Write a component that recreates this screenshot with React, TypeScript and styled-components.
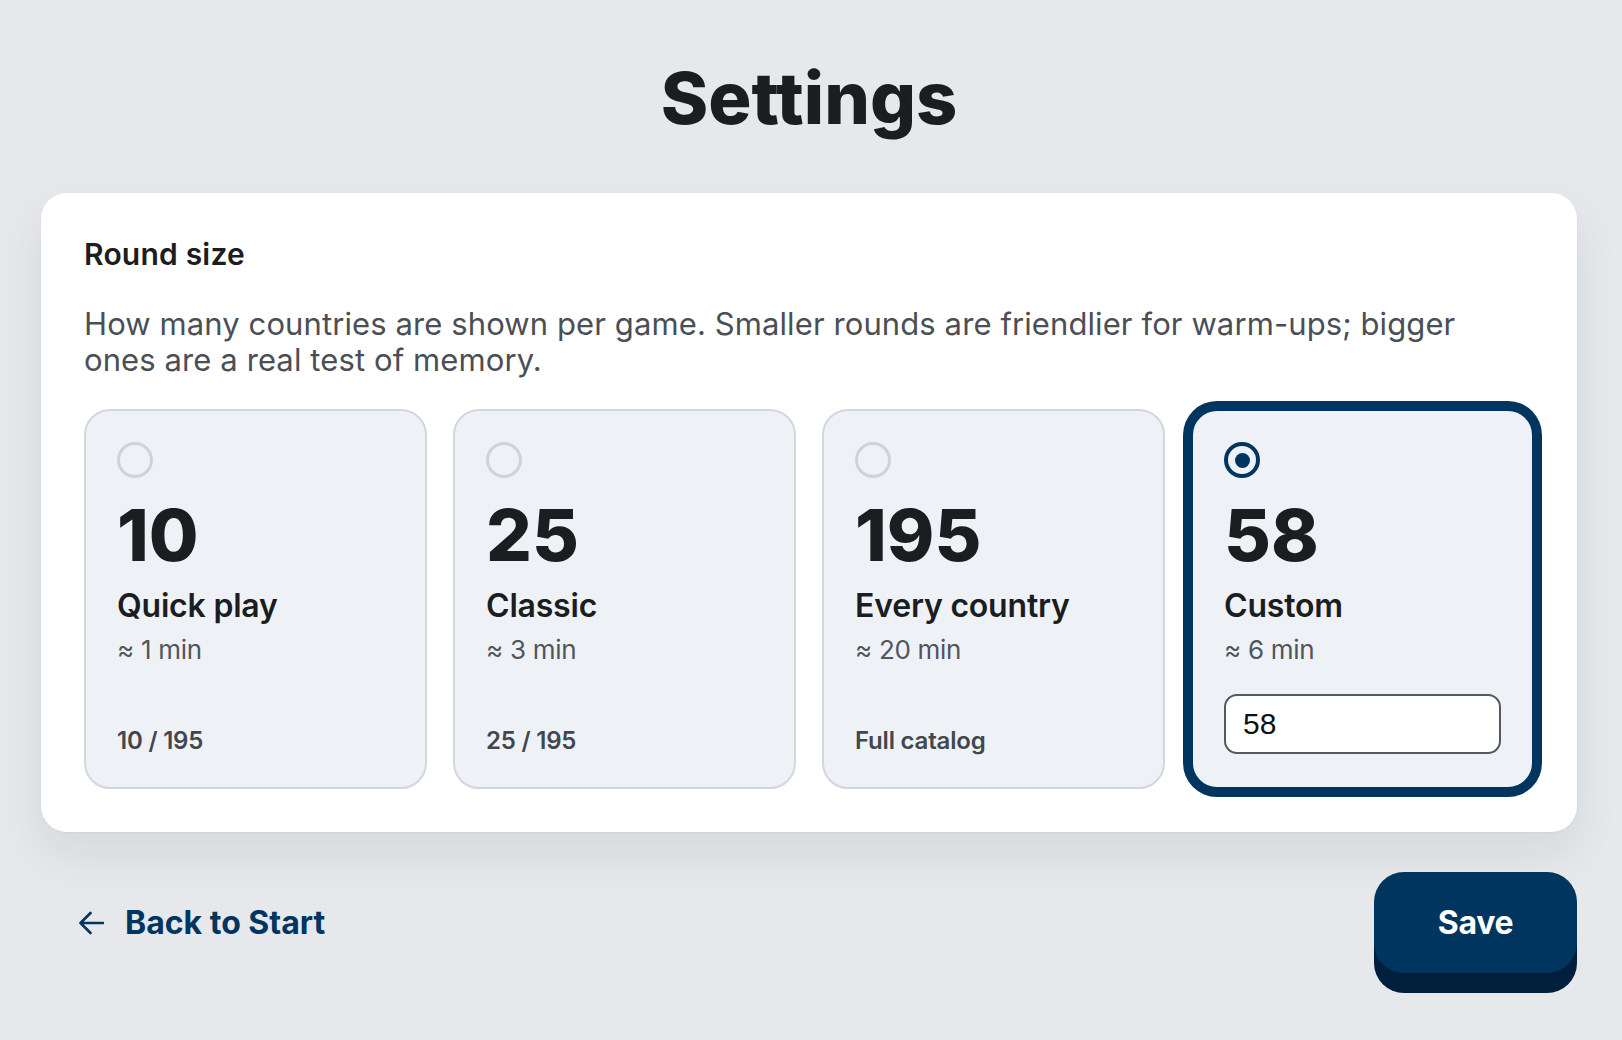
import React, { useState } from "react";
import styled, { createGlobalStyle } from "styled-components";

const GlobalStyle = createGlobalStyle`
  html, body {
    margin: 0;
    padding: 0;
    background: #e6e8eb;
    font-family: "Inter", "Noto Sans", sans-serif;
    color: #1b1d20;
  }
  * { box-sizing: border-box; }
`;

const NAVY = "#00355f";

const Page = styled.div`
  width: 1536px;
  margin: 0 0 0 41px;
  padding-top: 55px;
  display: flex;
  flex-direction: column;
`;

const Title = styled.h1`
  margin: 0 0 52px;
  text-align: center;
  font-size: 72px;
  line-height: 86px;
  font-weight: 800;
  letter-spacing: 0;
  color: #1b1d20;
`;

const Panel = styled.section`
  background: #ffffff;
  border-radius: 26px;
  padding: 42px 43px 43px;
  box-shadow: 0 22px 44px rgba(30, 40, 55, 0.08), 0 1px 2px rgba(30, 40, 55, 0.04);
`;

const SectionTitle = styled.h2`
  margin: 0;
  font-size: 30px;
  line-height: 38px;
  font-weight: 600;
  letter-spacing: 0.2px;
  color: #1b1d20;
`;

const Description = styled.p`
  margin: 33px 0 31px;
  max-width: 1400px;
  font-size: 31px;
  line-height: 36px;
  font-weight: 400;
  letter-spacing: 0.1px;
  color: #4b4f55;
`;

const Options = styled.div`
  display: grid;
  grid-template-columns: repeat(4, 1fr);
  gap: 26px;
`;

const Card = styled.label<{ $active: boolean }>`
  display: flex;
  flex-direction: column;
  min-height: 380px;
  padding: 31px 31px 33px;
  border-radius: 26px;
  background: #eef2f6;
  border: 2px solid ${(p) => (p.$active ? NAVY : "#d3d7dc")};
  box-shadow: ${(p) => (p.$active ? `0 0 0 8px ${NAVY}` : "none")};
  cursor: pointer;
`;

const Radio = styled.span<{ $active: boolean }>`
  width: 36px;
  height: 36px;
  border-radius: 50%;
  border: ${(p) => (p.$active ? `4px solid ${NAVY}` : "3px solid #cfd3d8")};
  display: flex;
  align-items: center;
  justify-content: center;
  flex-shrink: 0;

  &::after {
    content: "";
    width: 15px;
    height: 15px;
    border-radius: 50%;
    background: ${NAVY};
    display: ${(p) => (p.$active ? "block" : "none")};
  }
`;

const Count = styled.div`
  margin-top: 21px;
  font-size: 72px;
  line-height: 72px;
  font-weight: 800;
  letter-spacing: 0;
  color: #1b1d20;
`;

const Label = styled.div`
  margin-top: 15px;
  font-size: 32px;
  line-height: 40px;
  font-weight: 600;
  letter-spacing: -0.2px;
  color: #1b1d20;
`;

const Duration = styled.div`
  margin-top: 7px;
  font-size: 26px;
  line-height: 34px;
  font-weight: 400;
  letter-spacing: -0.3px;
  color: #50555c;
`;

const Foot = styled.div`
  margin-top: auto;
  font-size: 24px;
  line-height: 26px;
  font-weight: 600;
  letter-spacing: -0.2px;
  color: #43474d;
`;

const CustomInput = styled.input`
  margin-top: auto;
  width: 100%;
  height: 60px;
  padding: 0 17px;
  border: 2px solid #55585d;
  border-radius: 13px;
  background: #ffffff;
  font-family: "Liberation Sans", Arial, sans-serif;
  font-size: 30px;
  color: #111;
  outline: none;
`;

const Footer = styled.div`
  margin-top: 40px;
  display: flex;
  align-items: flex-start;
  justify-content: space-between;
`;

const BackLink = styled.a`
  margin-top: 31px;
  padding-left: 37px;
  display: flex;
  align-items: center;
  gap: 21px;
  font-size: 32px;
  line-height: 40px;
  font-weight: 700;
  letter-spacing: 0;
  color: ${NAVY};
  text-decoration: none;
  cursor: pointer;
`;

const SaveButton = styled.button`
  width: 203px;
  height: 101px;
  margin-bottom: 20px;
  border: none;
  border-radius: 30px;
  background: ${NAVY};
  box-shadow: 0 20px 0 #001f3c;
  color: #ffffff;
  font-family: "Inter", "Noto Sans", sans-serif;
  font-size: 32px;
  font-weight: 700;
  letter-spacing: -0.3px;
  cursor: pointer;
`;

interface Option {
  id: string;
  count: number;
  label: string;
  duration: string;
  foot?: string;
}

const options: Option[] = [
  { id: "quick", count: 10, label: "Quick play", duration: "≈ 1 min", foot: "10 / 195" },
  { id: "classic", count: 25, label: "Classic", duration: "≈ 3 min", foot: "25 / 195" },
  { id: "all", count: 195, label: "Every country", duration: "≈ 20 min", foot: "Full catalog" },
];

function BackArrow() {
  return (
    <svg width="26" height="24" viewBox="0 0 26 24" fill="none">
      <path d="M25 12H2.5M12.5 2L2.5 12l10 10" stroke={NAVY} strokeWidth="2.6" strokeLinecap="round" strokeLinejoin="round" />
    </svg>
  );
}

export default function App() {
  const [selected, setSelected] = useState("custom");
  const [custom, setCustom] = useState("58");
  const customMin = Math.max(1, Math.round((Number(custom) || 0) / 10));

  return (
    <>
      <GlobalStyle />
      <Page>
        <Title>Settings</Title>
        <Panel>
          <SectionTitle>Round size</SectionTitle>
          <Description>
            How many countries are shown per game. Smaller rounds are friendlier for warm-ups; bigger ones are a real test of memory.
          </Description>
          <Options>
            {options.map((o) => (
              <Card key={o.id} $active={selected === o.id} onClick={() => setSelected(o.id)}>
                <Radio $active={selected === o.id} />
                <Count>{o.count}</Count>
                <Label>{o.label}</Label>
                <Duration>{o.duration}</Duration>
                <Foot>{o.foot}</Foot>
              </Card>
            ))}
            <Card $active={selected === "custom"} onClick={() => setSelected("custom")}>
              <Radio $active={selected === "custom"} />
              <Count>{custom || 0}</Count>
              <Label>Custom</Label>
              <Duration>≈ {customMin} min</Duration>
              <CustomInput value={custom} onChange={(e) => setCustom(e.target.value)} />
            </Card>
          </Options>
        </Panel>
        <Footer>
          <BackLink>
            <BackArrow />
            Back to Start
          </BackLink>
          <SaveButton>Save</SaveButton>
        </Footer>
      </Page>
    </>
  );
}
